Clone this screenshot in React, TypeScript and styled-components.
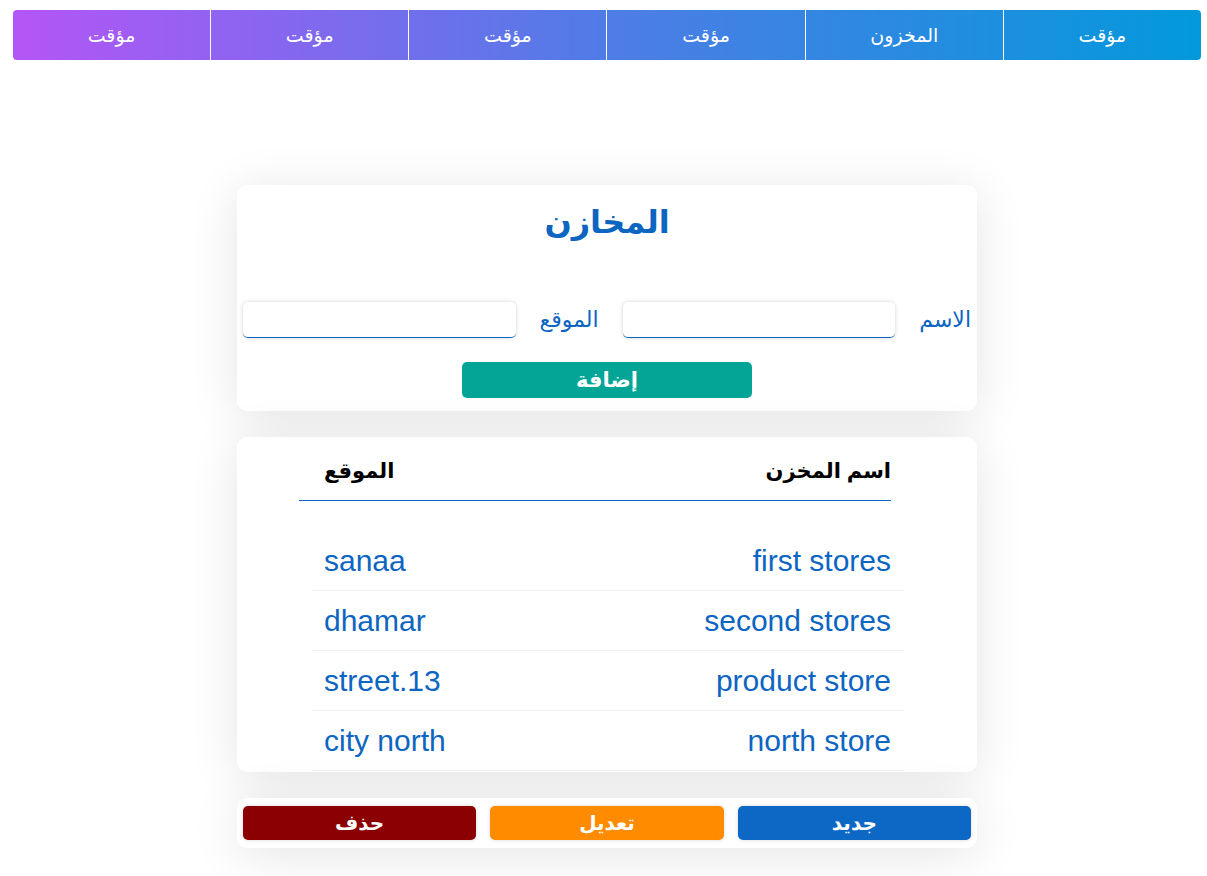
import React from "react";
import styled, { createGlobalStyle } from "styled-components";

const Global = createGlobalStyle`
  html, body { margin: 0; padding: 0; background: #ffffff; }
  body { font-family: "Liberation Sans", Arial, "DejaVu Sans", sans-serif; }
  * { box-sizing: border-box; }
`;

const Page = styled.div`
  direction: rtl;
  padding: 10px 6px 30px 13px;
`;

const Nav = styled.nav`
  display: flex;
  height: 50px;
  border-radius: 4px;
  overflow: hidden;
  background: linear-gradient(to left, #0399db, #4f7ce6 50%, #b455f6);
`;

const NavItem = styled.a`
  flex: 1;
  display: flex;
  align-items: center;
  justify-content: center;
  color: #fff;
  font-size: 19px;
  text-decoration: none;
  border-left: 1px solid #fff;
  &:last-child { border-left: none; }
`;

const Main = styled.main`
  width: 740px;
  margin: 125px auto 0;
  display: flex;
  flex-direction: column;
  gap: 26px;
`;

const Card = styled.section<{ $height?: number }>`
  background: #fff;
  border-radius: 10px;
  box-shadow: 0 6px 50px rgba(0, 0, 0, 0.11);
  overflow: hidden;
  ${(p) => (p.$height ? `height: ${p.$height}px;` : "")}
`;

const Title = styled.h1`
  margin: 0;
  text-align: center;
  color: #0d65c2;
  font-size: 32px;
  font-weight: bold;
  line-height: 50px;
  padding-top: 12px;
`;

const FormRow = styled.div`
  display: flex;
  align-items: center;
  gap: 24px;
  margin-top: 55px;
  padding: 0 6px;
`;

const Label = styled.label`
  color: #0d65c2;
  font-size: 22px;
  white-space: nowrap;
`;

const Input = styled.input`
  flex: 1;
  min-width: 0;
  height: 36px;
  border: none;
  border-bottom: 1px solid #0d65c2;
  border-radius: 5px;
  background: #fff;
  box-shadow: 0 0 4px rgba(0, 0, 0, 0.18);
  outline: none;
`;

const AddWrap = styled.div`
  display: flex;
  justify-content: center;
  padding: 24px 0 13px;
`;

const AddButton = styled.button`
  width: 290px;
  height: 36px;
  border: none;
  border-radius: 5px;
  background: #04a596;
  color: #fff;
  font-family: inherit;
  font-size: 21px;
  font-weight: bold;
`;

const HeadRow = styled.div`
  display: flex;
  justify-content: space-between;
  align-items: center;
  margin: 0 86px 0 62px;
  padding: 4px 0 0 25px;
  height: 64px;
  border-bottom: 1px solid #0d65c2;
`;

const HeadCell = styled.div`
  color: #000;
  font-size: 21px;
  font-weight: bold;
`;

const Rows = styled.div`
  margin: 30px 73px 0 75px;
`;

const Row = styled.div`
  display: flex;
  justify-content: space-between;
  align-items: center;
  height: 60px;
  padding: 0 13px 0 12px;
  border-bottom: 1px solid #efefef;
`;

const Cell = styled.div`
  color: #0d65c2;
  font-size: 30px;
  font-family: "Liberation Sans", Arial, sans-serif;
  direction: ltr;
`;

const Actions = styled.div`
  display: flex;
  gap: 14px;
  padding: 8px 6px;
`;

const ActionButton = styled.button<{ $bg: string }>`
  flex: 1;
  height: 34px;
  border: none;
  border-radius: 5px;
  background: ${(p) => p.$bg};
  color: #fff;
  font-family: inherit;
  font-size: 20px;
  font-weight: bold;
  box-shadow: 0 0 4px rgba(0, 0, 0, 0.15);
`;

const navItems = ["مؤقت", "المخزون", "مؤقت", "مؤقت", "مؤقت", "مؤقت"];
const rows = [
  ["first stores", "sanaa"],
  ["second stores", "dhamar"],
  ["product store", "street.13"],
  ["north store", "city north"],
];

export default function App() {
  return (
    <>
      <Global />
      <Page>
        <Nav>
          {navItems.map((n, i) => (
            <NavItem key={i} href="#">{n}</NavItem>
          ))}
        </Nav>
        <Main>
          <Card>
            <Title>المخازن</Title>
            <FormRow>
              <Label>الاسم</Label>
              <Input />
              <Label>الموقع</Label>
              <Input />
            </FormRow>
            <AddWrap>
              <AddButton>إضافة</AddButton>
            </AddWrap>
          </Card>
          <Card $height={335}>
            <HeadRow>
              <HeadCell>اسم المخزن</HeadCell>
              <HeadCell>الموقع</HeadCell>
            </HeadRow>
            <Rows>
              {rows.map(([a, b]) => (
                <Row key={a}>
                  <Cell>{a}</Cell>
                  <Cell>{b}</Cell>
                </Row>
              ))}
            </Rows>
          </Card>
          <Card>
            <Actions>
              <ActionButton $bg="#0d67c5">جديد</ActionButton>
              <ActionButton $bg="#ff8c00">تعديل</ActionButton>
              <ActionButton $bg="#8b0000">حذف</ActionButton>
            </Actions>
          </Card>
        </Main>
      </Page>
    </>
  );
}
